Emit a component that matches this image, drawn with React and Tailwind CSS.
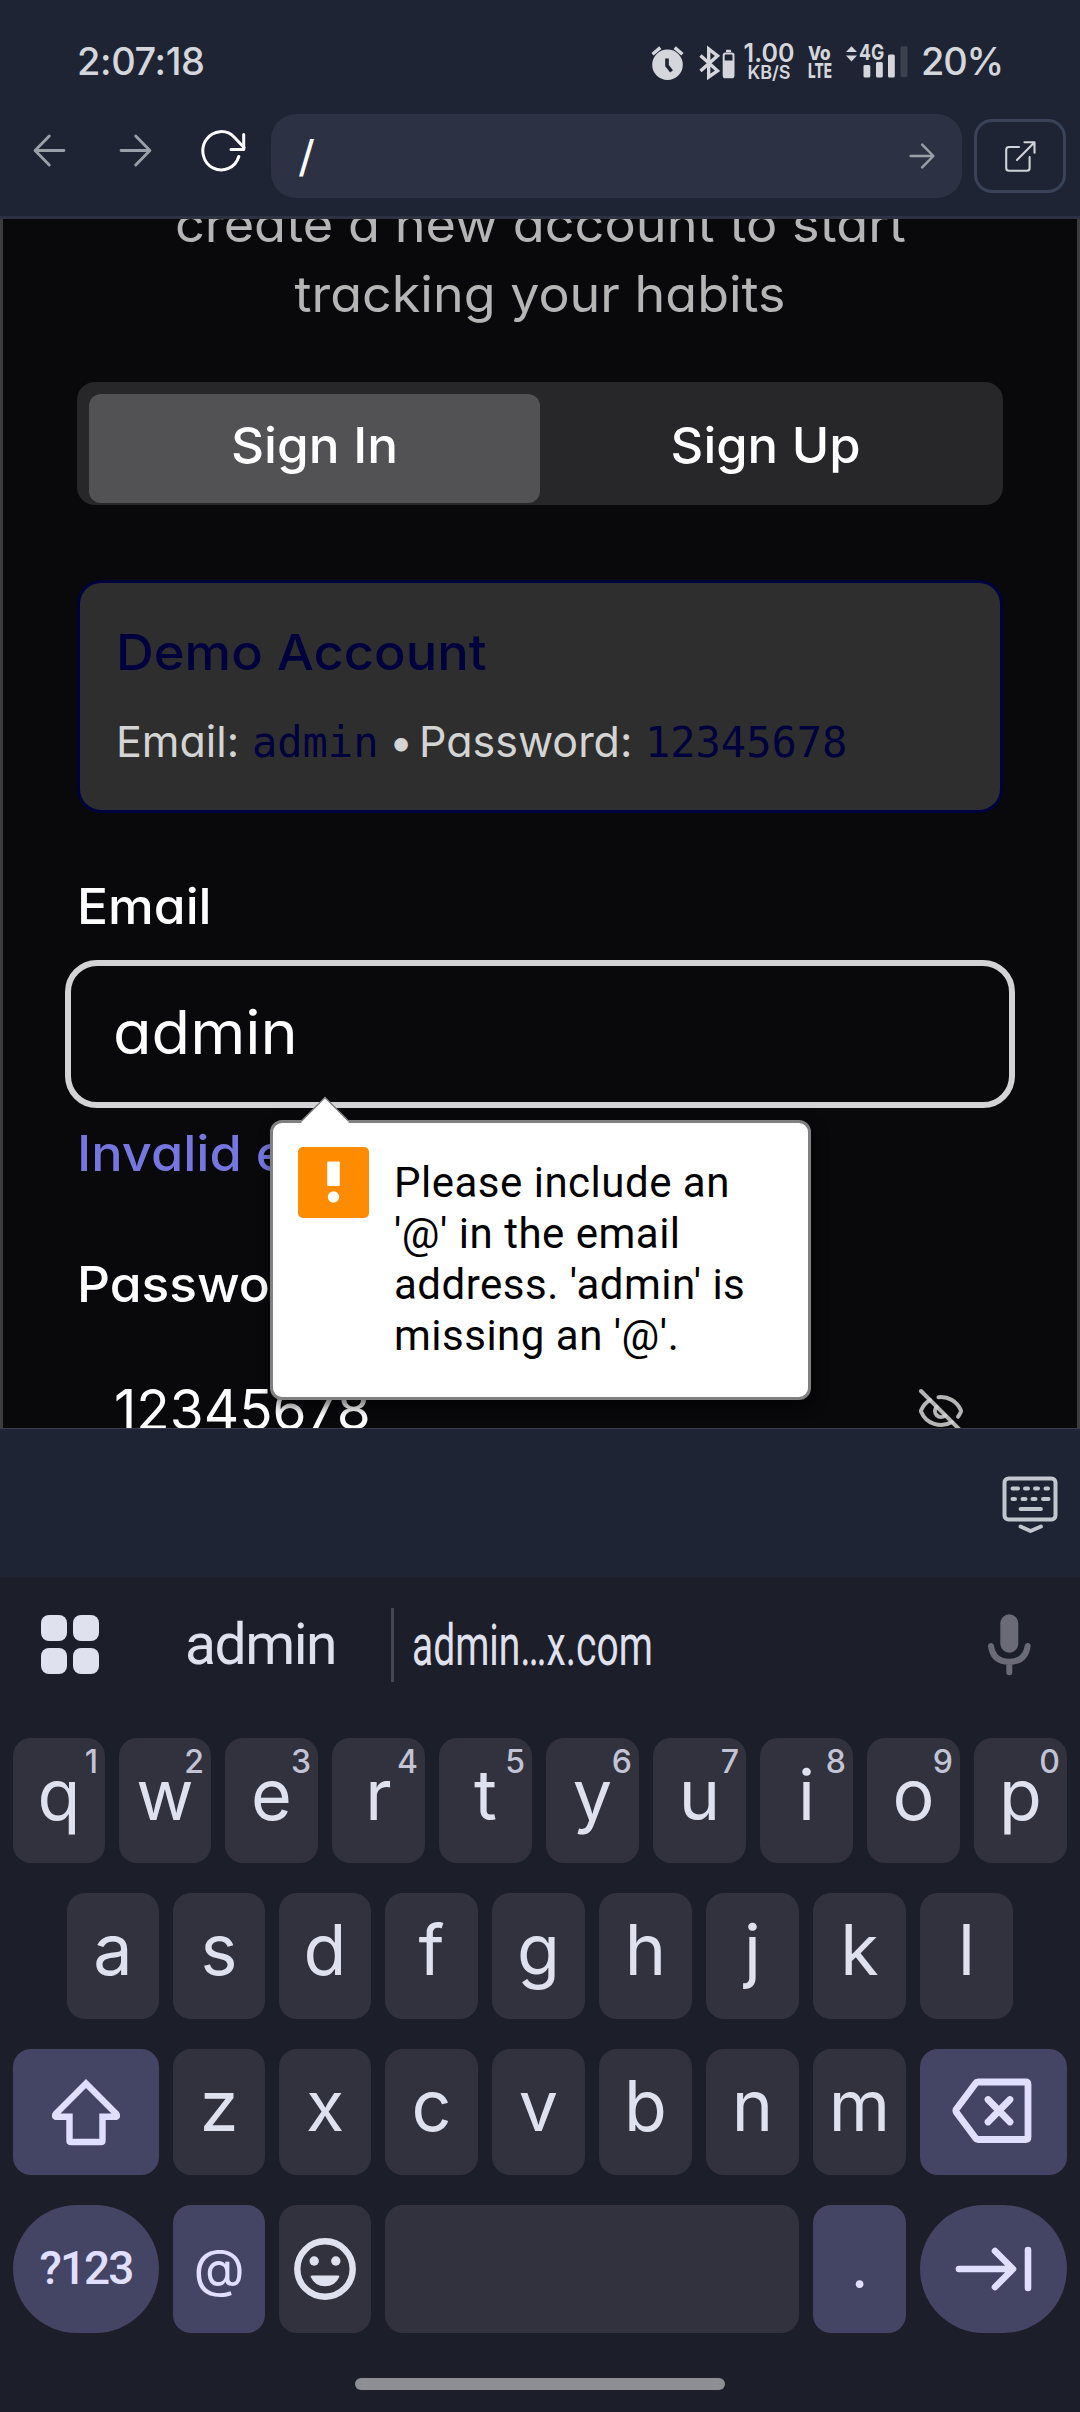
import React from "react";
import { EyeOff } from "lucide-react";

const ROW_ONE = [
  ["q", "1"], ["w", "2"], ["e", "3"], ["r", "4"], ["t", "5"],
  ["y", "6"], ["u", "7"], ["i", "8"], ["o", "9"], ["p", "0"],
];
const ROW_TWO = ["a", "s", "d", "f", "g", "h", "j", "k", "l"];
const ROW_THREE = ["z", "x", "c", "v", "b", "n", "m"];

function AlarmIcon() {
  return (
    <svg className="mt-[45px] h-[36px] w-[33px] shrink-0" viewBox="0 0 33 36" fill="none">
      <circle cx="16.5" cy="19.7" r="15.3" fill="#d5d6dc" />
      <path d="M1.5 9.2 9.3 2.6M31.5 9.2 23.7 2.6" stroke="#d5d6dc" strokeWidth="3.4" />
      <path d="M16 13.5v7.2l4.6 5.6" stroke="#1e2433" strokeWidth="3.6" />
    </svg>
  );
}

function BluetoothIcon() {
  return (
    <svg className="mt-[45px] ml-[14px] h-[36px] w-[37px] shrink-0" viewBox="0 0 37 36" fill="none">
      <path d="M2.5 10.5 19.5 25.8 10.7 32V4L19.5 10.8 2.5 26" stroke="#d5d6dc" strokeWidth="3.4" strokeLinejoin="miter" />
      <rect x="28" y="4.8" width="5" height="2.4" fill="#d5d6dc" />
      <rect x="25.7" y="8.6" width="9.8" height="23.6" rx="1.8" stroke="#d5d6dc" strokeWidth="2" />
      <rect x="25" y="15.5" width="11" height="17.2" rx="1.5" fill="#d5d6dc" />
    </svg>
  );
}

function SignalIcon() {
  return (
    <svg className="h-[36px] w-[64px]" viewBox="0 0 64 36" fill="#d5d6dc">
      <path d="M0 7 5.5 1.2 11 7ZM0 10.6h11L5.500 16.400Z" />
      <rect x="17.5" y="20" width="6.8" height="12.4" rx="1.5" />
      <rect x="30" y="17" width="6.8" height="15.4" rx="1.5" />
      <rect x="42" y="9.5" width="6.8" height="22.9" rx="1.5" />
      <rect x="54.5" y="1.3" width="7" height="31" rx="1.5" fill="#3c4150" />
    </svg>
  );
}

function StatusBar() {
  return (
    <div className="flex h-24 items-start text-[#d5d6dc]">
      <div className="mt-[41px] ml-[77px] w-[574px] text-[38px] leading-10 font-medium tracking-[-0.4px]">2:07:18</div>
      <AlarmIcon />
      <BluetoothIcon />
      <div className="mt-[43px] ml-[8px] w-[52px] text-center whitespace-nowrap">
        <div className="text-[25px] leading-[21px] font-semibold">1.00</div>
        <div className="text-[18px] leading-[17px] font-semibold">KB/S</div>
      </div>
      <div className="mt-[44px] ml-[13px] w-[38px] whitespace-nowrap">
        <div className="origin-left scale-x-90 text-[19px] leading-[19px] font-extrabold">Vo</div>
        <div className="origin-left scale-x-[0.68] text-[20px] leading-[17px] font-extrabold">LTE</div>
      </div>
      <div className="relative mt-[45px] h-9 w-[64px] shrink-0">
        <SignalIcon />
        <span className="absolute -top-0.5 left-[13px] origin-left scale-x-[0.8] text-[22px] leading-[18px] font-bold">4G</span>
      </div>
      <div className="mt-[41px] ml-[11px] text-[38px] leading-10 font-medium tracking-[-1.2px]">20%</div>
    </div>
  );
}

function Arrow({ className, d, width }) {
  return (
    <svg className={className} viewBox="0 0 32 32" fill="none" stroke="currentColor" strokeWidth={width} strokeLinecap="round" strokeLinejoin="round">
      <path d={d} />
    </svg>
  );
}

const LEFT = "M30 16H2.5M15.8 2 2 16l13.8 14";
const RIGHT = "M2 16h27.5M16.2 2 30 16 16.2 30";

function BrowserBar() {
  return (
    <div className="flex h-[123px] border-b-[3px] border-[#2c3144] pl-[33px]">
      <Arrow className="mt-[38px] h-[33px] w-[33px] shrink-0 text-[#9aa0a8]" d={LEFT} width={2.8} />
      <Arrow className="mt-[38px] ml-[53px] h-[33px] w-[33px] shrink-0 text-[#9aa0a8]" d={RIGHT} width={2.8} />
      <svg className="mt-[31px] ml-[48px] h-[47px] w-[48px] shrink-0" viewBox="0 0 48 47" fill="none" stroke="#fff" strokeWidth="3" strokeLinecap="round" strokeLinejoin="round">
        <path d="M38.8 29.500A18.4 19.2 0 1 1 34.500 10.500L44 20.500" />
        <path d="M43.700 7.500V22.600H31" />
      </svg>
      <div className="mt-[18px] ml-[23px] flex h-[84px] w-[691px] shrink-0 items-start justify-between rounded-[25px] bg-[#2c3144] pr-[27px] pl-[27px]">
        <span className="mt-3 origin-left scale-x-110 text-[43px] leading-[60px] text-white">/</span>
        <Arrow className="mt-[29px] h-[26px] w-[26px] text-[#9aa0a8]" d={RIGHT} width={3} />
      </div>
      <div className="mt-[23px] ml-[12px] flex h-[74px] w-[92px] shrink-0 items-center justify-center rounded-[18px] border-[3px] border-[#3b435a]">
        <svg className="h-8 w-8" viewBox="0 0 32 32" fill="none" stroke="#d0d3d8" strokeWidth="2.1" strokeLinejoin="round">
          <path d="M15 7H5Q2.2 7 2.2 9.8V28Q2.2 30.8 5 30.8H22.8Q25.6 30.8 25.6 28V17" strokeLinecap="round" />
          <path d="M13 20 30.3 2.5M20.5 2.3H30.5V12.8" strokeLinecap="round" />
        </svg>
      </div>
    </div>
  );
}

function ValidationPopup() {
  return (
    <div className="absolute top-[901px] left-[267px] h-[280px] w-[541px] rounded-xl border-[3px] border-[#808080] bg-white shadow-[3px_6px_14px_rgba(0,0,0,0.6)]">
      <svg className="absolute -top-[27px] left-[27px] h-[28px] w-[50px]" viewBox="0 0 50 28">
        <path d="M1.5 25.5 25 1.500 48.5 25.5V28H1.500Z" fill="#fff" />
        <path d="M1.5 25 25 1.5 48.5 25" fill="none" stroke="#808080" strokeWidth="1.5" />
      </svg>
      <div className="flex">
        <svg className="mt-[24px] ml-[25px] h-[71px] w-[71px] shrink-0" viewBox="0 0 71 71">
          <rect width="71" height="71" rx="5" fill="#ff8c00" />
          <rect x="29.2" y="14.5" width="12.6" height="24.5" rx="1" fill="#fff" />
          <circle cx="35.5" cy="50" r="5.7" fill="#fff" />
        </svg>
        <p className="mt-[34px] ml-[25px] w-[380px] font-[Roboto] text-[42px] leading-[51px] tracking-[0.5px] whitespace-nowrap text-black">
          Please include an<br />'@' in the email<br />address. 'admin' is<br />missing an '@'.
        </p>
      </div>
    </div>
  );
}

function LoginPage() {
  return (
    <main className="relative h-[1209px] overflow-hidden border-x-[3px] border-[#3c3c3d] bg-[#09090b] px-[74px] text-white [font-feature-settings:'cv11']">
      <p className="-mt-[30px] text-center text-[50px] leading-[70px] whitespace-nowrap text-[#b5b5b5]">
        <span className="inline-block scale-x-[1.046]">create a new account to start</span>
        <br />
        <span className="inline-block scale-x-[1.04]">tracking your habits</span>
      </p>

      <div className="mt-[53px] grid h-[123px] grid-cols-2 rounded-[18px] bg-[#272729] px-3 pt-3 text-center text-[50px] leading-[103px] font-medium">
        <div className="h-[109px] rounded-xl bg-[#525254]">
          <span className="inline-block scale-x-[1.025]">Sign In</span>
        </div>
        <div>
          <span className="inline-block scale-x-[1.015]">Sign Up</span>
        </div>
      </div>

      <section className="mt-[75px] h-[233px] rounded-3xl border-[3px] border-[#00003f] bg-[#2e2e2e] pt-[39px] pl-[36px]">
        <h2 className="origin-left scale-x-[1.048] text-[50px] leading-[60px] font-medium text-[#00003f]">Demo Account</h2>
        <div className="mt-[29px] flex text-[43px] leading-[60px] whitespace-nowrap text-[#d4d4d4]">
          <span className="w-[136px]">Email:</span>
          <span className="mt-0.5 w-[137px] font-['DejaVu_Sans_Mono'] text-[42px] text-[#00003f]">admin</span>
          <span className="w-[30px]">•</span>
          <span className="w-[226px]">Password:</span>
          <span className="mt-0.5 font-['DejaVu_Sans_Mono'] text-[42px] text-[#00003f]">12345678</span>
        </div>
      </section>

      <label className="mt-[63px] block origin-left scale-x-[1.03] text-[50px] leading-[60px] font-medium">Email</label>
      <div className="-mx-3 mt-6 flex h-[148px] items-center rounded-[32px] border-[6px] border-[#d3d3d6] pb-[5px] pl-[42px] text-[60px]">
        <span className="origin-left scale-x-[1.05]">admin</span>
      </div>
      <p className="mt-[15px] origin-left scale-x-[1.045] text-[50px] leading-[60px] font-medium text-[#7676e0]">Invalid email address</p>

      <label className="mt-[71px] block origin-left scale-x-[1.03] text-[50px] leading-[60px] font-medium">Password</label>
      <div className="mt-[56px] flex items-start justify-between pr-[38px] pl-[37px]">
        <span className="origin-left scale-x-[0.98] text-[56px] leading-[80px]">12345678</span>
        <EyeOff className="mt-[17px] text-[#d4d4d4]/85" size={48} strokeWidth={2} />
      </div>

      <ValidationPopup />
    </main>
  );
}

function AccessoryBar() {
  return (
    <div className="flex h-[149px] justify-end border-t-[1.5px] border-[#363d4d] pr-[22px]">
      <svg className="mt-[47px] h-[58px] w-[56px]" viewBox="0 0 56 58" fill="none" stroke="#c2c7ce" strokeLinecap="round" strokeLinejoin="round">
        <rect x="2.5" y="2.5" width="51" height="41" rx="4" strokeWidth="4" />
        <path d="M10.5 12.5h5.5M23 12.5h3M33 12.5h3M43.5 12.5h2.5M10.5 23h2.5M20.5 23h3M30.5 23h3M41 23h5.5" strokeWidth="4" />
        <path d="M18.5 33h20.5M18.5 50.5 28.5 55 39 50.5" strokeWidth="3.8" />
      </svg>
    </div>
  );
}

function SuggestionStrip() {
  return (
    <div className="flex h-[161px] items-start">
      <div className="mt-[38px] ml-[41px] grid w-[58px] shrink-0 grid-cols-2 gap-x-[6px] gap-y-[7px]">
        <i className="h-[26px] rounded-lg bg-[#e0e1ee]" />
        <i className="h-[26px] rounded-lg bg-[#e0e1ee]" />
        <i className="h-[26px] rounded-lg bg-[#e0e1ee]" />
        <i className="h-[26px] rounded-lg bg-[#e0e1ee]" />
      </div>
      <span className="mt-[38px] ml-[86px] w-[206px] font-[Roboto] text-[57px] leading-[60px] tracking-[-1.5px]">admin</span>
      <span className="mt-[31px] h-[74px] w-[3px] shrink-0 bg-[#454754]" />
      <span className="mt-[38px] ml-[18px] w-[576px] font-[Roboto] text-[58px] leading-[60px]">
        <span className="inline-block origin-left scale-x-[0.672]">admin…x.com</span>
      </span>
      <svg className="mt-[37px] h-[62px] w-[43px] shrink-0" viewBox="0 0 43 62" fill="none">
        <rect x="12.3" y="0.3" width="18" height="38.4" rx="9" fill="#6a6b76" />
        <path d="M3 32C4.5 43 11.5 47.8 21.3 47.8S38 43 39.7 32M21.3 48v10.3" stroke="#6a6b76" strokeWidth="6" strokeLinecap="round" />
      </svg>
    </div>
  );
}

function Key({ label, hint, narrow }) {
  return (
    <div className={`relative shrink-0 rounded-[18px] bg-[#31323e] text-center text-[70px] leading-[114px] ${narrow ? "w-[92px]" : "w-[93px]"}`}>
      {label}
      {hint && <span className="absolute top-[4px] right-[7px] text-[32px] leading-10 font-medium text-[#c3c3d6]">{hint}</span>}
    </div>
  );
}

function Keyboard() {
  return (
    <div className="h-[835px] bg-[#1c1e29] text-[#e0e1ee]">
      <SuggestionStrip />
      <div className="flex h-[125px] gap-[14px] px-[13px]">
        {ROW_ONE.map(([label, hint], i) => <Key key={label} label={label} hint={hint} narrow={i < 2} />)}
      </div>
      <div className="mt-[30px] flex h-[126px] gap-[14px] px-[67px]">
        {ROW_TWO.map((label, i) => <Key key={label} label={label} narrow={i < 3} />)}
      </div>
      <div className="mt-[30px] flex h-[126px] gap-[14px] px-[13px]">
        <div className="flex w-[146px] items-center justify-center rounded-[18px] bg-[#444464]">
          <svg className="h-[68px] w-[70px]" viewBox="0 0 70 68" fill="none" stroke="#e1dfff" strokeWidth="6.4">
            <path d="M35 5.5 65 35.500Q67.500 38.800 64 38.800H51.5V62.5Q51.5 64 50 64H20Q18.5 64 18.5 62.5V38.800H6Q2.500 38.800 5 35.500Z" strokeLinejoin="miter" />
          </svg>
        </div>
        {ROW_THREE.map((label, i) => <Key key={label} label={label} narrow={i < 2} />)}
        <div className="flex w-[147px] items-center justify-center rounded-[18px] bg-[#444464]">
          <svg className="-mt-0.5 mr-1 h-[66px] w-[80px]" viewBox="0 0 80 66" fill="none" stroke="#e1dfff" strokeWidth="6.8" strokeLinejoin="round" strokeLinecap="round">
            <path d="M26 4H73.5Q76 4 76 6.5V59Q76 61.5 73.5 61.5H26Q24.5 61.5 23.5 60L4.5 34.5Q3.3 32.8 4.5 31L23.5 5.5Q24.5 4 26 4Z" />
            <path d="M36 21.5 58 44M58 21.5 36 44" />
          </svg>
        </div>
      </div>
      <div className="mt-[30px] flex h-[128px] gap-[14px] px-[13px] text-center">
        <div className="w-[146px] rounded-full bg-[#444464] font-[Roboto] text-[46px] leading-[126px] font-medium tracking-[-2px] text-[#e1dfff]">?123</div>
        <div className="w-[92px] rounded-[18px] bg-[#444464] text-[53px] leading-[126px] text-[#e1dfff]">@</div>
        <div className="flex w-[92px] items-center justify-center rounded-[18px] bg-[#31323e]">
          <svg className="h-[62px] w-[62px]" viewBox="0 0 62 62" fill="#e0e1ee">
            <circle cx="31" cy="31" r="27.7" fill="none" stroke="#e0e1ee" strokeWidth="6.4" />
            <circle cx="20.2" cy="23" r="4.7" />
            <circle cx="41.8" cy="23" r="4.7" />
            <path d="M18 37.5H44Q46 37.5 45 39.5A15.5 15.5 0 0 1 17 39.5Q16 37.5 18 37.5Z" />
          </svg>
        </div>
        <div className="flex-1 rounded-[18px] bg-[#31323e]" />
        <div className="w-[93px] rounded-[18px] bg-[#444464] text-[58px] leading-[125px] text-[#e1dfff]">.</div>
        <div className="flex w-[147px] items-center justify-center rounded-full bg-[#444464]">
          <svg className="mr-0.5 h-[48px] w-[78px]" viewBox="0 0 78 48" fill="none" stroke="#e1dfff" strokeWidth="6.6" strokeLinecap="round" strokeLinejoin="round">
            <path d="M5 24H58M41 6 59 24 41 42M74 5V43" />
          </svg>
        </div>
      </div>
      <div className="mx-auto mt-[45px] h-3 w-[370px] rounded-full bg-[#8d8e93]" />
    </div>
  );
}

export default function App() {
  return (
    <div className="flex h-[2412px] w-[1080px] flex-col overflow-hidden bg-[#1e2433] font-[Inter,sans-serif]">
      <StatusBar />
      <BrowserBar />
      <LoginPage />
      <AccessoryBar />
      <Keyboard />
    </div>
  );
}
